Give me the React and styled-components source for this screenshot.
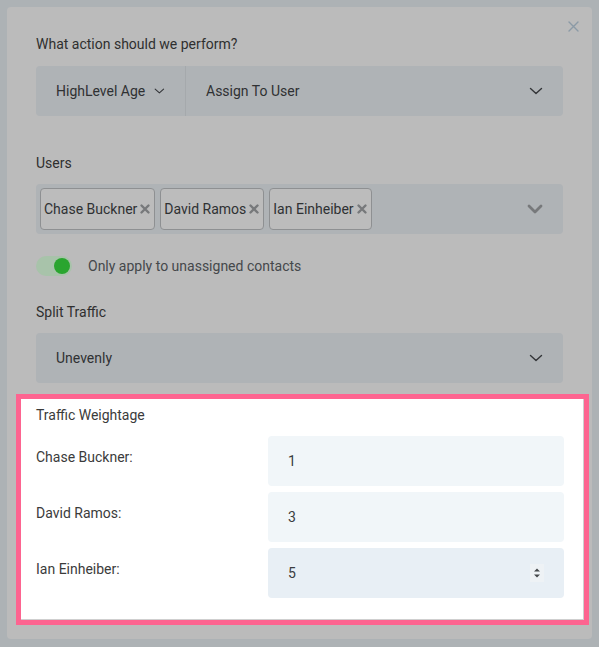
import React from "react";
import styled, { createGlobalStyle } from "styled-components";

const Global = createGlobalStyle`
  html, body { margin: 0; padding: 0; }
  body {
    background: #adb2b5;
    font-family: Roboto, "Liberation Sans", Arial, sans-serif;
    width: 599px;
    height: 647px;
    overflow: hidden;
  }
`;

const Card = styled.div`
  position: relative;
  margin: 7px 0 0 7px;
  width: 585px;
  height: 632px;
  box-sizing: border-box;
  background: #bbbbbb;
  border-radius: 4px;
  padding: 27px 29px 0 29px;
  display: flex;
  flex-direction: column;
`;

const Close = styled.button`
  position: absolute;
  top: 14px;
  right: 13px;
  width: 11px;
  height: 11px;
  padding: 0;
  border: 0;
  background: none;
  display: flex;
  align-items: center;
  justify-content: center;
`;

const Label = styled.div`
  font-size: 14px;
  line-height: 20px;
  color: ${(p) => (p.$light ? "#3b3b3b" : "#2f2f2f")};
  margin-top: ${(p) => p.$mt || 0}px;
`;

const Field = styled.div`
  margin-top: ${(p) => p.$mt || 0}px;
  height: 50px;
  background: #afb3b6;
  border-radius: 4px;
  display: flex;
  align-items: center;
  box-sizing: border-box;
`;

const Segment = styled.div`
  display: flex;
  align-items: center;
  height: 100%;
  box-sizing: border-box;
  padding: 0 20px;
  font-size: 14px;
  color: #2f3133;
  gap: 9px;
  white-space: nowrap;
  flex: ${(p) => (p.$grow ? 1 : "none")};
  width: ${(p) => (p.$w ? p.$w + "px" : "auto")};
  border-right: ${(p) => (p.$divider ? "1px solid #a5a9ac" : "none")};
  justify-content: ${(p) => (p.$grow ? "space-between" : "flex-start")};
`;

const Tags = styled.div`
  flex: 1;
  display: flex;
  gap: 5px;
  padding-left: 4px;
`;

const Tag = styled.div`
  height: 42px;
  box-sizing: border-box;
  border: 1px solid #8e9092;
  border-radius: 4px;
  background: #bcbcbc;
  display: flex;
  align-items: center;
  padding: 0 3px 0 3px;
  gap: 2px;
  font-size: 14px;
  color: #2f3133;
`;

const ToggleRow = styled.div`
  margin-top: 22px;
  display: flex;
  align-items: center;
  gap: 16px;
  height: 20px;
`;

const Track = styled.div`
  position: relative;
  width: 36px;
  height: 20px;
  border-radius: 10px;
  background: #a8c3aa;
`;

const Knob = styled.div`
  position: absolute;
  right: 2px;
  top: 2px;
  width: 16px;
  height: 16px;
  border-radius: 50%;
  background: #2aa52f;
`;

const ToggleText = styled.span`
  font-size: 14px;
  color: #45484b;
`;

const Highlight = styled.div`
  margin: 11px -26px 0 -20px;
  border: 5px solid #fd6490;
  background: #fff;
  box-shadow: inset -1px -1px 0 #cfcfcf;
  padding: 6px 20px 22px 15px;
  display: flex;
  flex-direction: column;
`;

const Rows = styled.div`
  margin-top: 11px;
  display: flex;
  flex-direction: column;
  gap: 6px;
`;

const Row = styled.div`
  display: grid;
  grid-template-columns: 232px 1fr;
  align-items: start;
`;

const RowLabel = styled.div`
  font-size: 14px;
  line-height: 20px;
  padding-top: 11px;
  color: #3b3b3b;
`;

const Input = styled.div`
  height: 50px;
  border-radius: 4px;
  background: ${(p) => (p.$active ? "#e8eff5" : "#f1f6f9")};
  display: flex;
  align-items: center;
  justify-content: space-between;
  padding: 0 20px;
  font-size: 14px;
  color: #3a3d40;
`;

const Spinner = styled.div`
  width: 14px;
  height: 18px;
  background: #eef2f5;
  display: flex;
  align-items: center;
  justify-content: center;
  margin-right: 0;
`;

const Chevron = ({ bold }) =>
  bold ? (
    <svg width="16" height="10" viewBox="0 0 16 10">
      <path d="M2 2 L8 8 L14 2" fill="none" stroke="#77797b" strokeWidth="2.8" strokeLinecap="round" strokeLinejoin="round" />
    </svg>
  ) : (
    <svg width="14" height="8" viewBox="0 0 14 8">
      <path d="M1.5 1.5 L7 6.5 L12.5 1.5" fill="none" stroke="#333538" strokeWidth="1.4" strokeLinecap="round" strokeLinejoin="round" />
    </svg>
  );

const X = () => (
  <svg width="12" height="12" viewBox="0 0 12 12">
    <path d="M2.5 2.5 L9.5 9.5 M9.5 2.5 L2.5 9.5" stroke="#77797b" strokeWidth="2.4" strokeLinecap="round" />
  </svg>
);

const users = ["Chase Buckner", "David Ramos", "Ian Einheiber"];
const weights = [1, 3, 5];

export default function App() {
  return (
    <>
      <Global />
      <Card>
        <Close aria-label="close">
          <svg width="11" height="11" viewBox="0 0 11 11">
            <path d="M1 1 L10 10 M10 1 L1 10" stroke="#8b9aa6" strokeWidth="1.4" strokeLinecap="round" />
          </svg>
        </Close>

        <Label>What action should we perform?</Label>
        <Field $mt={12}>
          <Segment $w={150} $divider>
            HighLevel Age <Chevron />
          </Segment>
          <Segment $grow>
            Assign To User <Chevron />
          </Segment>
        </Field>

        <Label $mt={37}>Users</Label>
        <Field $mt={11}>
          <Tags>
            {users.map((u) => (
              <Tag key={u}>
                {u} <X />
              </Tag>
            ))}
          </Tags>
          <Segment>
            <Chevron bold />
          </Segment>
        </Field>

        <ToggleRow>
          <Track>
            <Knob />
          </Track>
          <ToggleText>Only apply to unassigned contacts</ToggleText>
        </ToggleRow>

        <Label $mt={26}>Split Traffic</Label>
        <Field $mt={11}>
          <Segment $grow>
            Unevenly <Chevron />
          </Segment>
        </Field>

        <Highlight>
          <Label $light>Traffic Weightage</Label>
          <Rows>
            {users.map((u, i) => (
              <Row key={u}>
                <RowLabel>{u}:</RowLabel>
                <Input $active={i === 2}>
                  {weights[i]}
                  {i === 2 && (
                    <Spinner>
                      <svg width="8" height="12" viewBox="0 0 8 12">
                        <path d="M4 1.5 L7 4.5 L1 4.5 Z M4 10.5 L7 7.5 L1 7.5 Z" fill="#45484b" />
                      </svg>
                    </Spinner>
                  )}
                </Input>
              </Row>
            ))}
          </Rows>
        </Highlight>
      </Card>
    </>
  );
}
